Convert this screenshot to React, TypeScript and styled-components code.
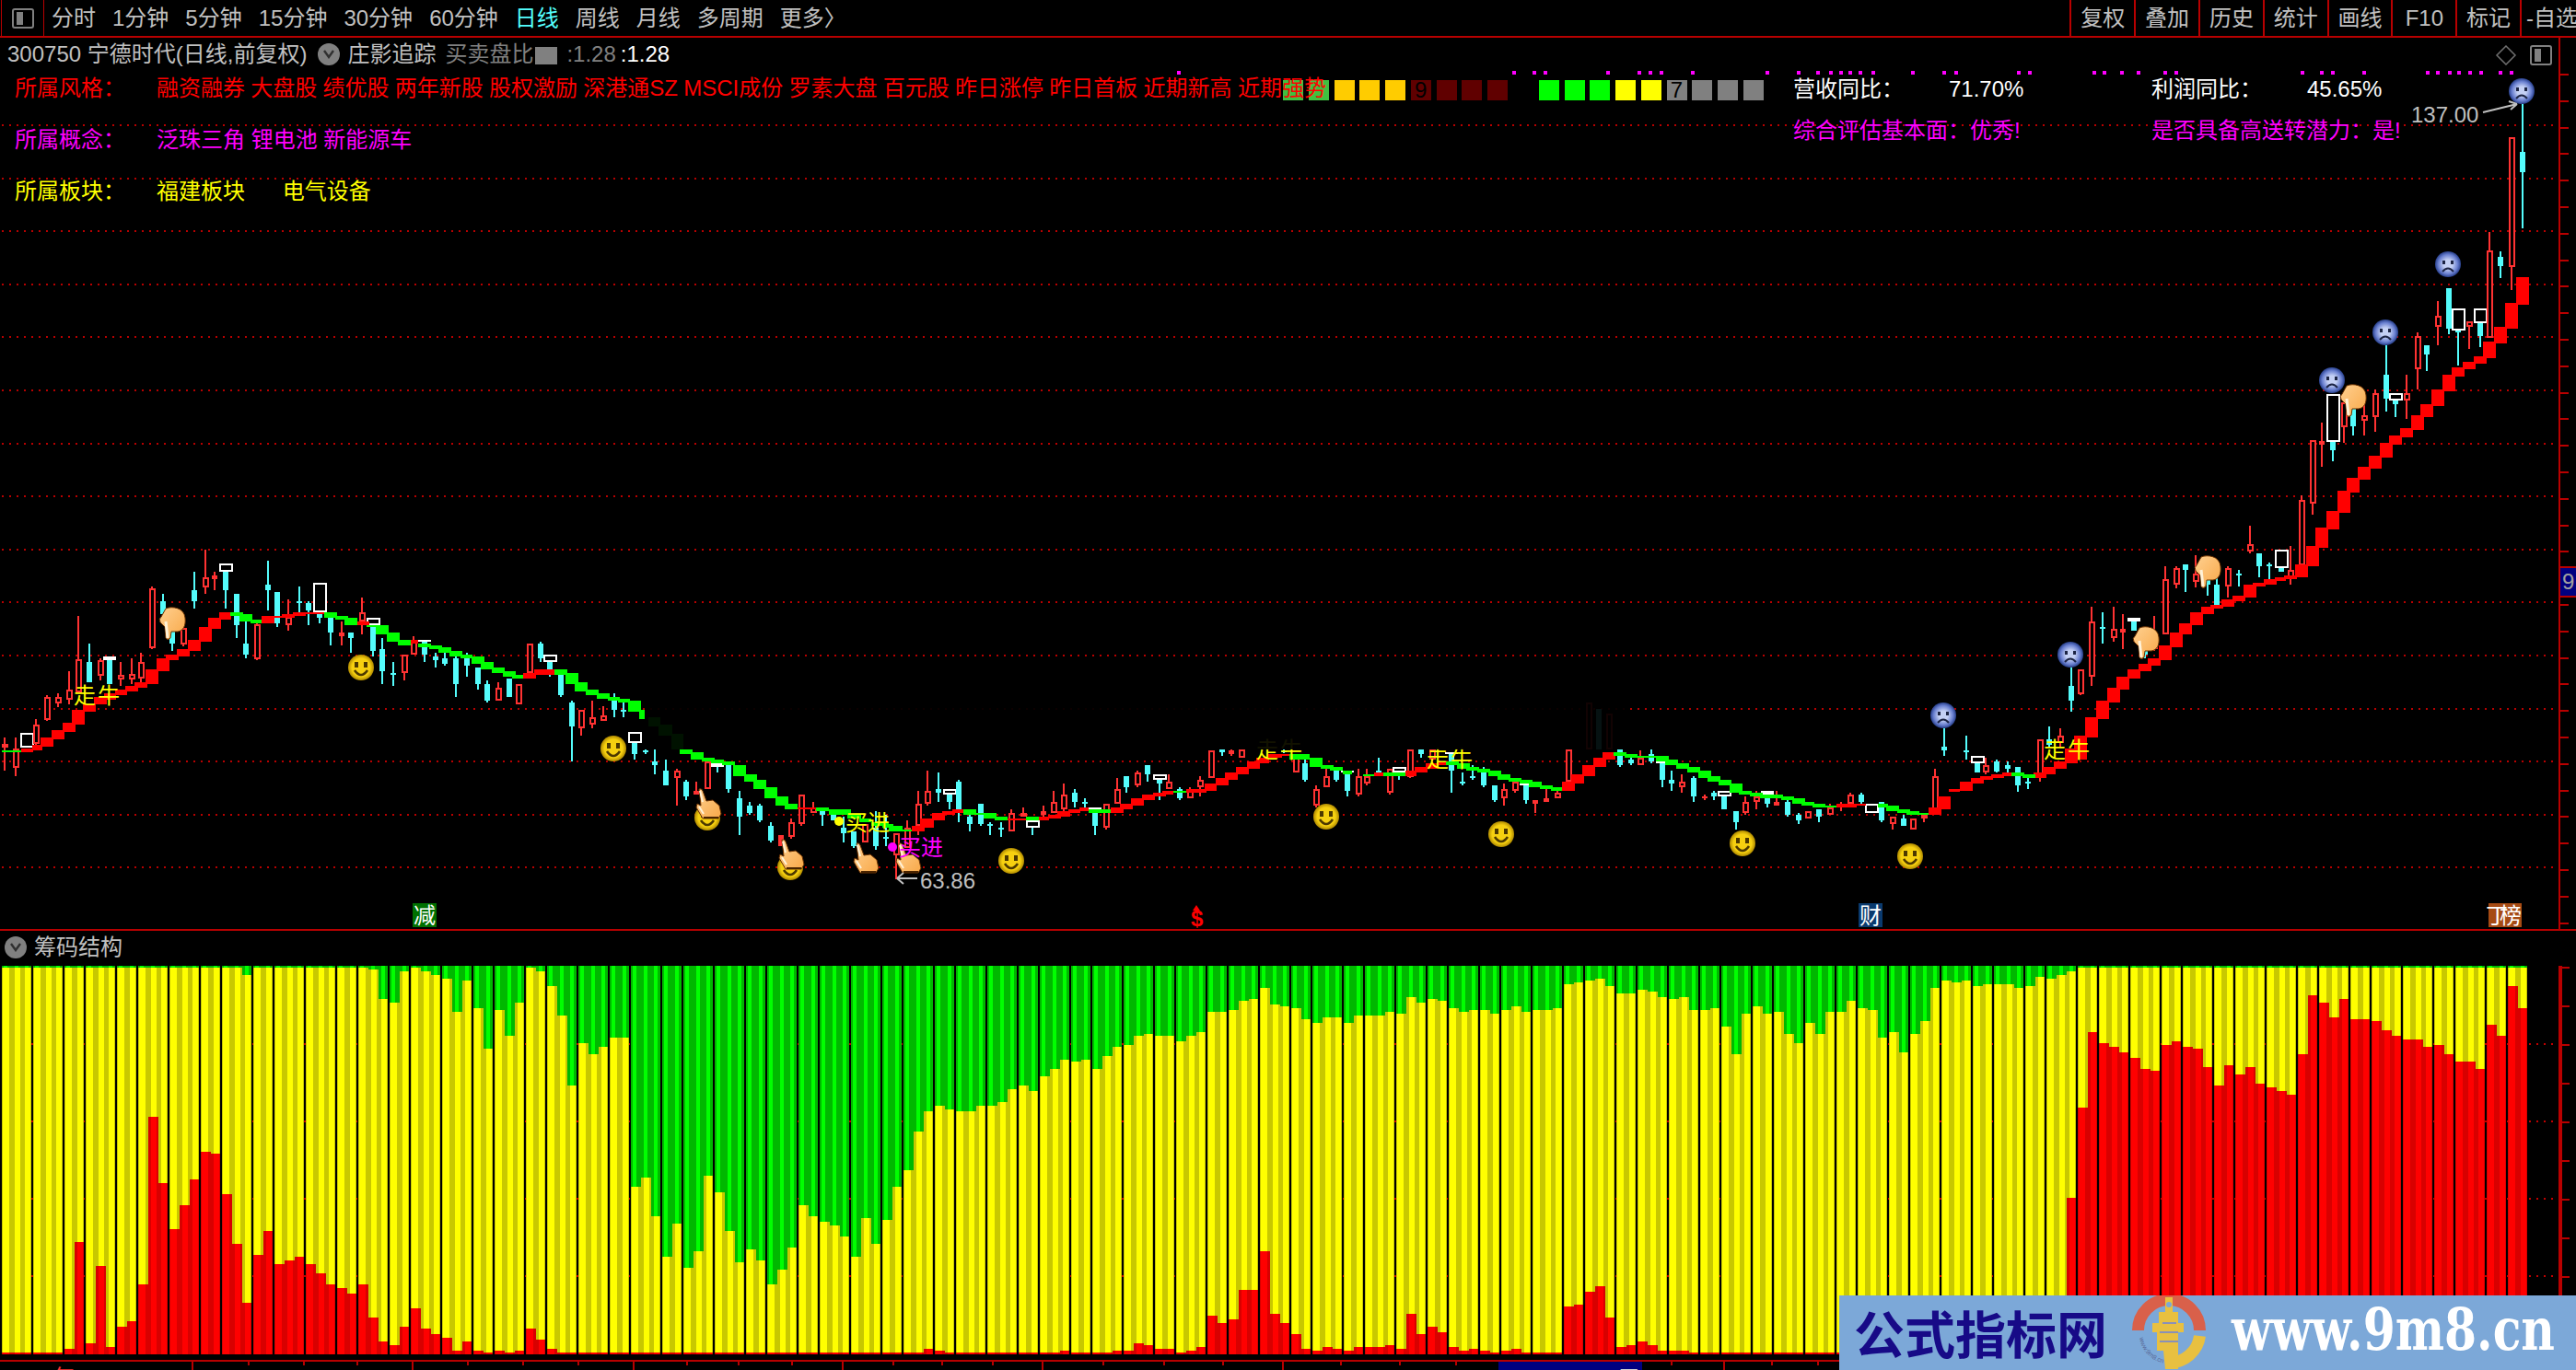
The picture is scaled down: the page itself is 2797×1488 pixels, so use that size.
import React from 'react';
import styled, { createGlobalStyle } from 'styled-components';

const SANS = '"Liberation Sans", "Noto Sans CJK SC", sans-serif';
const LINE = '#b80000';

const GlobalStyle = createGlobalStyle`
  html, body { margin: 0; padding: 0; background: #000; }
  #root { width: 2797px; height: 1488px; overflow: hidden; }
`;

const Root = styled.div`
  position: relative;
  width: 2797px;
  height: 1488px;
  background: #000;
  display: flex;
  flex-direction: column;
  overflow: hidden;
  font-family: ${SANS};
  font-size: 24px;
  line-height: 24px;
  color: #c0c0c0;
  white-space: nowrap;
`;

/* ---------- toolbar ---------- */
const Toolbar = styled.header`
  flex: none;
  height: 39px;
  display: flex;
  align-items: stretch;
  justify-content: space-between;
  border-bottom: 2px solid ${LINE};
`;
const LeftTools = styled.div`
  display: flex;
  align-items: center;
`;
const MenuBox = styled.div`
  width: 45px;
  align-self: stretch;
  margin-left: 1px;
  margin-right: 8px;
  border-left: 1px solid ${LINE};
  border-right: 1px solid ${LINE};
  display: flex;
  align-items: center;
  justify-content: center;
`;
const PanelIcon = styled.span`
  display: block;
  box-sizing: border-box;
  width: 24px;
  height: 22px;
  border: 2px solid #808080;
  border-radius: 3px;
  position: relative;
  &::before {
    content: '';
    position: absolute;
    left: 3px;
    top: 2px;
    bottom: 2px;
    width: 7px;
    background: #808080;
  }
`;
const Tabs = styled.nav`
  display: flex;
  gap: 18px;
`;
const Tab = styled.span<{ $active?: boolean }>`
  color: ${p => (p.$active ? '#54ffff' : '#c0c0c0')};
`;
const RightTools = styled.div`
  display: flex;
`;
const ToolButton = styled.span`
  box-sizing: border-box;
  width: 69.8px;
  border-left: 2px solid ${LINE};
  display: flex;
  align-items: center;
  justify-content: center;
`;
const ClippedButton = styled(ToolButton)`
  width: 61px;
  justify-content: flex-start;
  padding-left: 5px;
  overflow: hidden;
`;

/* ---------- main pane ---------- */
const MainPane = styled.section`
  position: relative;
  flex: none;
  height: 968px;
  border-bottom: 2px solid ${LINE};
`;
const ChartLayer = styled.svg`
  position: absolute;
  left: 0;
  top: 0;
  display: block;
`;
const TitleRow = styled.div`
  position: relative;
  height: 36px;
  padding-left: 8px;
  display: flex;
  align-items: center;
`;
const Chevron = styled.span`
  display: inline-flex;
  flex: none;
  align-items: center;
  justify-content: center;
  width: 24px;
  height: 24px;
  border-radius: 50%;
  background: #808080;
`;
const TitleChevron = styled(Chevron)`
  margin: 0 8px 0 12px;
`;
const StudyName = styled.span`
  margin-right: 10px;
`;
const DimLabel = styled.span`
  color: #808080;
`;
const GreyBox = styled.span`
  width: 24px;
  height: 19px;
  margin: 2px 10px 0 2px;
  background: #808080;
`;
const RatioA = styled.span`
  color: #808080;
  margin-right: 5px;
`;
const RatioB = styled.span`
  color: #fff;
`;
const Attributes = styled.div`
  position: relative;
  margin-top: 7px;
  padding-left: 16px;
  display: grid;
  grid-template-columns: 154px auto;
  row-gap: 32px;
  justify-content: start;
`;
const AttrLabel = styled.span<{ $c: string }>`
  color: ${p => p.$c};
`;
const AttrValue = styled.span<{ $c: string; $gap?: number }>`
  color: ${p => p.$c};
  word-spacing: ${p => p.$gap ?? 0}px;
`;
const BlockStrip = styled.div`
  position: absolute;
  left: 1393px;
  top: 46px;
  display: flex;
  gap: 5.75px;
`;
const Block = styled.span<{ $c: string; $after?: number }>`
  width: 22px;
  height: 22px;
  background: ${p => p.$c};
  margin-right: ${p => p.$after ?? 0}px;
  color: #000;
  text-align: center;
  line-height: 22px;
  overflow: hidden;
`;
const Stats = styled.div`
  position: absolute;
  left: 1947px;
  top: 44px;
  display: grid;
  grid-template-columns: 389px 280px;
  row-gap: 21px;
`;
const StatCell = styled.div`
  display: grid;
  grid-template-columns: 169px auto;
  color: #fff;
`;
const StatNote = styled.div`
  color: #ff00ff;
`;
const RightIcons = styled.div`
  position: absolute;
  right: 26px;
  top: 8px;
  display: flex;
  align-items: center;
  gap: 14px;
`;
const PriceTag = styled.div`
  position: absolute;
  left: 2780px;
  top: 574px;
  width: 17px;
  height: 34px;
  box-sizing: border-box;
  background: #000080;
  border-top: 2px solid ${LINE};
  border-bottom: 2px solid ${LINE};
  color: #a0a0a0;
  line-height: 30px;
  padding-left: 2px;
  overflow: hidden;
`;

/* ---------- lower pane ---------- */
const SubHeader = styled.div`
  flex: none;
  height: 38px;
  display: flex;
  align-items: center;
  padding-left: 5px;
  gap: 8px;
  padding-bottom: 2px;
  box-sizing: border-box;
`;
const SubChart = styled.svg`
  flex: none;
  display: block;
`;
const Watermark = styled.aside`
  position: absolute;
  left: 1997px;
  top: 1407px;
  width: 800px;
  height: 81px;
  background: #7ca8d8;
  display: flex;
  align-items: center;
`;
const WatermarkTitle = styled.span`
  margin-left: 16px;
  font-family: "Noto Sans CJK SC", sans-serif;
  font-weight: 700;
  font-size: 55px;
  line-height: 60px;
  color: #170a87;
  margin-top: -4px;
`;
const Logo = styled.svg`
  flex: none;
  margin-left: 27px;
  margin-top: -1px;
`;
const WatermarkUrl = styled.span`
  font-family: "DejaVu Serif", serif;
  font-weight: 700;
  font-size: 63px;
  line-height: 70px;
  margin-top: -8px;
  margin-left: 28px;
  color: #fff;
  transform: scaleX(0.8);
  transform-origin: left center;
`;

const ChartText = styled.text<{ $c: string; $size?: number; $bold?: boolean }>`
  font-family: ${SANS};
  font-size: ${p => p.$size ?? 24}px;
  font-weight: ${p => (p.$bold ? 700 : 400)};
  fill: ${p => p.$c};
`;

/* ---------- data helpers ---------- */
type Frame = { sx: number; x0: number; y0: number; sy?: number };
const Z4: Frame = { sx: 1.96, x0: 0, y0: 580 };
const Z5: Frame = { sx: 1.96, x0: 700, y0: 760 };
const Z10: Frame = { sx: 2.306, x0: 1480, y0: 770 };
const Z8: Frame = { sx: 2.25, x0: 2100, y0: 300, sy: 2.8 };

const fx = (f: Frame, v: number) => f.x0 + v / f.sx;
const fy = (f: Frame, v: number) => f.y0 + v / (f.sy ?? 3);

type C = [number, number, number, number, number, string, number?];

const candles4: C[] = [
  [10,663,770,683,697,'r'],[33,663,788,700,763,'r'],[57,647,697,647,697,'b'],[77,603,690,622,685,'r'],[100,525,608,532,607,'r'],
  [123,520,565,532,553,'r'],[147,447,555,508,541,'r'],[167,267,520,407,515,'r'],[190,357,483,417,483,'c'],[213,405,477,412,463,'r'],
  [233,400,489,400,410,'W',489],[257,417,495,460,475,'r'],[280,405,490,455,475,'r'],[300,387,490,418,470,'r'],[323,172,375,178,373,'r'],
  [347,195,290,220,260,'c'],[366,315,380,315,357,'c'],[390,305,365,305,361,'r'],[413,123,243,183,219,'c'],[437,51,195,142,175,'r'],
  [457,123,183,135,147,'f'],[480,95,243,95,122,'w',183],[503,195,339,195,297,'c'],[523,285,405,357,393,'c'],[547,291,411,293,409,'r'],
  [570,87,249,165,183,'c'],[590,189,303,189,291,'c'],[613,213,315,270,297,'r'],[637,171,255,220,225,'c'],[657,220,297,225,249,'c'],
  [680,160,291,160,255,'w',273],[704,270,363,273,321,'c'],[727,285,363,321,333,'f'],[747,321,387,321,339,'c'],[770,207,327,255,285,'r'],
  [794,273,399,273,297,'w',381],[813,339,489,375,447,'c'],[837,417,495,453,459,'c'],[860,393,477,393,453,'r'],[880,333,393,345,393,'r'],
  [903,345,417,345,351,'W',393],[927,387,435,399,411,'c'],[947,387,429,405,423,'c'],[970,399,531,405,489,'c'],[993,387,465,405,429,'c'],
  [1017,435,507,435,489,'c'],[1037,477,549,489,543,'c'],[1060,483,543,501,543,'r'],[1083,471,531,471,531,'c'],[1103,489,555,489,555,'r'],
  [1127,357,453,357,453,'r'],[1150,351,417,357,405,'c'],[1170,393,465,393,417,'w',459],[1193,459,531,459,525,'c'],[1217,543,741,549,627,'c'],
  [1237,573,657,573,633,'r'],[1260,543,633,597,621,'r'],[1284,561,609,591,609,'r'],[1307,519,597,543,573,'c'],[1327,549,597,573,579,'c'],
  [1350,645,735,645,681,'w',717],[1374,702,717,705,711,'c'],
];
const candles5: C[] = [
  [22,162,243,200,213,'c'],[45,195,279,231,279,'c'],[68,225,345,231,255,'r'],[88,261,327,267,315,'c'],[110,267,309,297,309,'f'],
  [134,201,291,201,291,'r'],[155,207,237,207,219,'W',219],[178,219,303,207,213,'W',291],[202,297,441,321,381,'c'],[224,333,375,345,369,'c'],
  [245,339,399,345,393,'c'],[268,399,465,411,459,'c'],[290,441,477,441,477,'f'],[312,387,453,399,447,'r'],[334,309,411,309,405,'r'],
  [358,333,369,351,369,'r'],[378,351,411,351,357,'W',375],[402,363,393,363,393,'c'],[424,381,465,417,435,'c'],[445,429,483,429,477,'c'],
  [468,405,465,405,465,'r'],[491,363,489,417,477,'c'],[514,375,477,447,453,'c'],[535,435,585,435,507,'r'],[558,393,483,417,483,'r'],
  [582,297,441,339,411,'r'],[602,231,345,297,339,'r'],[625,237,333,291,303,'c'],[648,291,357,291,309,'w',333],[668,261,399,267,369,'c'],
  [691,369,429,381,405,'c'],[715,339,411,339,405,'c'],[735,399,441,405,411,'c'],[758,399,447,417,423,'c'],[781,357,429,369,429,'r'],
  [805,351,381,369,381,'r'],[825,393,441,393,417,'w',417],[849,345,381,363,375,'f'],[871,297,369,333,369,'r'],[892,273,363,309,357,'r'],
  [915,291,351,303,333,'c'],[937,321,351,333,339,'c'],[958,351,441,351,357,'W',411],[982,339,423,339,417,'r'],[1005,255,339,291,339,'r'],
  [1025,249,303,249,285,'c'],[1048,231,285,237,279,'r'],[1071,213,267,213,243,'c'],[1095,243,327,243,261,'w',273],[1115,243,291,267,291,'r'],
  [1138,285,327,291,321,'c'],[1161,285,321,291,321,'r'],[1182,249,315,261,285,'r'],[1205,165,255,165,255,'r'],[1228,162,183,162,171,'c'],
  [1248,162,183,165,177,'f'],[1271,162,189,162,189,'r'],[1360,162,175,165,172,'c'],[1386,183,237,183,237,'r'],[1405,195,267,207,261,'c'],
  [1428,279,351,291,345,'r'],[1451,225,285,249,285,'r'],[1471,225,267,231,261,'c'],[1495,231,315,231,237,'W',297],[1519,225,315,249,309,'r'],
];
const candles10: C[] = [
  [10,195,249,219,243,'r'],[39,159,207,202,207,'c'],[67,195,279,195,273,'r'],[90,189,231,189,207,'w',207],[118,132,225,132,222,'r'],
  [145,132,159,132,147,'c'],[172,132,170,132,165,'r'],[222,141,273,141,147,'W',201],[250,207,249,237,243,'c'],[274,183,231,219,225,'c'],
  [301,189,255,207,249,'c'],[330,249,303,249,297,'c'],[352,243,315,261,291,'r'],[380,237,273,237,267,'r'],[408,237,309,237,249,'W',297],
  [431,297,339,297,309,'f'],[458,261,303,291,303,'f'],[486,267,291,273,291,'r'],[514,132,237,132,237,'r'],[565,-20,132,-20,132,'r'],
  [590,0,132,0,132,'c'],[615,15,132,15,132,'r'],[643,132,189,132,183,'c'],[671,159,183,165,177,'c'],[695,135,183,159,183,'r'],
  [722,132,177,147,171,'c'],[750,171,255,171,177,'W',231],[772,201,267,231,243,'c'],[799,213,273,237,255,'r'],[828,219,303,225,285,'c'],
  [855,279,297,285,291,'f'],[878,267,297,273,285,'c'],[905,267,327,267,285,'w',327],[934,333,393,333,369,'c'],[957,285,345,303,339,'r'],
  [985,267,327,285,303,'r'],[1012,267,321,267,279,'W',309],[1035,267,315,303,315,'f'],[1063,297,351,303,345,'c'],[1090,339,375,345,363,'c'],
  [1114,333,357,333,357,'r'],[1141,327,369,327,351,'c'],[1168,309,345,321,345,'r'],[1196,303,333,309,315,'f'],[1219,273,315,279,309,'r'],
  [1247,273,309,279,303,'c'],[1274,309,339,309,339,'b'],[1298,303,369,303,363,'c'],[1326,351,393,351,375,'r'],[1353,345,381,357,381,'c'],
  [1377,357,393,357,393,'r'],[1404,345,369,345,357,'r'],[1431,195,327,219,327,'r'],
];
const candles8: C[] = [
  [24,1375,1458,1430,1442,'c'],[78,1397,1470,1441,1447,'c'],[105,1459,1508,1459,1481,'w',1508],[127,1465,1515,1487,1509,'r'],[154,1470,1510,1475,1505,'c'],
  [181,1475,1510,1487,1497,'c'],[204,1492,1568,1492,1548,'c'],[230,1520,1560,1537,1542,'c'],[258,1408,1537,1408,1526,'r'],[281,1369,1430,1408,1425,'c'],
  [308,1375,1430,1397,1420,'r'],[335,1190,1323,1246,1291,'c'],[357,1196,1275,1196,1270,'r'],[384,1005,1246,1051,1217,'r'],[411,1022,1117,1067,1072,'c'],
  [438,1005,1112,1073,1100,'r'],[461,1028,1134,1073,1084,'f'],[488,1040,1078,1040,1050,'W',1078],[515,1140,1162,1140,1150,'c'],[538,1034,1140,1120,1135,'r'],
  [565,882,1089,921,1089,'r'],[592,882,949,888,938,'r'],[614,876,960,876,893,'c'],[640,849,945,905,930,'r'],[668,921,972,921,938,'c'],
  [691,916,1000,938,1000,'c'],[718,882,977,888,944,'r'],[744,893,944,904,910,'c'],[771,759,843,815,837,'r'],[794,843,916,843,882,'c'],
  [820,871,921,876,882,'c'],[848,832,899,832,888,'w',899],[870,820,938,893,921,'r'],[897,665,880,680,880,'r'],[924,497,725,497,691,'r'],
  [947,445,580,502,512,'f'],[974,357,563,357,505,'w',529],[1001,384,507,384,460,'r'],[1023,400,484,400,456,'c'],[1050,389,484,423,440,'r'],
  [1077,345,473,356,428,'r'],[1104,209,412,300,372,'c'],[1127,356,428,356,378,'w',389],[1154,300,434,356,378,'r'],[1181,171,344,182,283,'r'],
  [1204,209,288,209,238,'c'],[1231,76,210,121,154,'r'],[1257,36,176,36,160,'c'],[1280,98,272,98,165,'w',171],[1307,138,221,138,154,'r'],
  [1334,98,216,98,143,'w',182],[1356,-134,188,-78,188,'r'],[1384,-76,5,-59,-30,'c'],[1411,-423,42,-423,-28,'r'],[1438,-524,-146,-378,-316,'c'],
];

type S = [number, number, number, number, string];
const stair4: S[] = [
  [3,47,705,710,'g'],[45,70,700,711,'r'],[68,90,687,705,'r'],[86,113,663,693,'r'],[110,137,639,669,'r'],[133,161,615,645,'r'],[153,180,573,621,'r'],
  [176,204,555,579,'r'],[200,227,531,555,'r'],[222,247,519,540,'r'],[245,270,507,525,'r'],[267,294,495,513,'r'],[286,313,483,501,'r'],[310,337,441,489,'r'],
  [333,361,405,447,'r'],[353,380,393,411,'r'],[376,404,375,399,'r'],[400,427,345,381,'r'],[423,451,303,351,'r'],[443,470,273,309,'r'],[466,492,255,279,'r'],
  [490,517,255,267,'g'],[510,537,261,285,'g'],[533,561,279,291,'g'],[557,584,267,291,'r'],[580,607,267,273,'r'],[600,627,261,273,'r'],[623,650,255,267,'r'],
  [650,690,255,261,'r'],[690,717,255,273,'g'],[713,740,267,279,'g'],[733,760,273,297,'g'],[760,785,285,297,'r'],[780,806,297,303,'g'],[800,827,297,327,'g'],
  [823,851,321,351,'g'],[847,874,345,363,'g'],[874,890,345,357,'r'],[890,917,357,369,'g'],[913,940,363,375,'g'],[933,960,369,387,'g'],[956,983,381,399,'g'],
  [980,1006,393,405,'g'],[1004,1031,399,423,'g'],[1023,1050,417,441,'g'],[1047,1074,435,453,'g'],[1070,1097,447,465,'g'],[1090,1117,459,471,'g'],
  [1113,1140,453,471,'r'],[1137,1180,441,459,'r'],[1180,1207,441,459,'g'],[1203,1230,453,489,'g'],[1223,1250,483,513,'g'],[1247,1274,507,525,'g'],
  [1270,1297,519,537,'g'],[1294,1320,531,543,'g'],[1316,1340,537,549,'g'],[1337,1364,543,579,'g'],[1360,1372,573,603,'g'],[1380,1405,597,627,'g'],
  [1402,1430,621,657,'g'],[1428,1455,651,702,'g'],[1446,1473,702,717,'g'],[1470,1497,711,735,'g'],
];
const stair5: S[] = [
  [122,149,189,201,'g'],[141,168,195,207,'g'],[165,192,201,213,'g'],[188,216,213,249,'g'],[212,239,243,267,'g'],[231,258,261,291,'g'],[255,282,285,321,'g'],
  [278,305,315,345,'g'],[298,325,339,357,'g'],[325,365,351,357,'r'],[365,392,351,363,'g'],[392,440,357,375,'g'],[432,460,375,387,'g'],[456,483,387,399,'g'],
  [483,520,399,411,'g'],[505,530,405,417,'g'],[520,548,411,429,'g'],[545,570,423,429,'g'],[568,595,411,429,'r'],[587,615,387,417,'r'],[611,638,369,393,'r'],
  [634,661,363,375,'r'],[655,678,357,369,'r'],[678,705,357,375,'g'],[705,725,369,375,'g'],[721,748,369,387,'g'],[745,772,381,393,'g'],[772,811,387,393,'r'],
  [811,838,381,393,'g'],[838,861,381,393,'r'],[858,885,375,387,'r'],[878,905,363,381,'r'],[901,928,357,369,'r'],[925,945,351,363,'r'],[945,995,357,369,'g'],
  [992,1019,351,369,'r'],[1011,1038,339,357,'r'],[1035,1062,321,345,'r'],[1058,1085,309,327,'r'],[1082,1109,303,315,'r'],[1102,1125,297,309,'r'],
  [1125,1152,297,303,'g'],[1152,1195,291,303,'r'],[1191,1218,273,297,'r'],[1215,1242,255,279,'r'],[1235,1262,237,261,'r'],[1258,1285,219,243,'r'],
  [1282,1309,201,225,'r'],[1301,1328,189,207,'r'],[1324,1356,177,189,'r'],[1356,1380,177,183,'r'],[1372,1392,177,195,'g'],[1388,1415,177,195,'g'],
  [1415,1442,189,219,'g'],[1439,1466,213,225,'g'],[1458,1485,219,231,'g'],[1485,1505,231,243,'g'],
];
const stair10: S[] = [
  [0,27,213,219,'g'],[27,51,207,219,'r'],[51,105,207,219,'g'],[105,133,201,219,'r'],[129,161,189,207,'r'],[157,188,177,195,'r'],[185,208,171,183,'r'],
  [208,240,171,183,'g'],[236,267,177,195,'g'],[258,290,189,201,'g'],[286,318,195,207,'g'],[314,346,201,219,'g'],[337,369,213,231,'g'],[364,396,225,237,'g'],
  [392,424,231,243,'g'],[415,447,237,255,'g'],[443,475,249,261,'g'],[470,503,255,267,'g'],[498,530,237,267,'r'],[521,553,213,243,'r'],[549,581,183,219,'r'],
  [576,608,159,189,'r'],[600,632,141,165,'r'],[627,659,141,153,'g'],[655,687,147,159,'g'],[687,734,153,159,'g'],[734,766,153,171,'g'],[757,789,165,183,'g'],
  [784,816,177,195,'g'],[812,844,189,207,'g'],[839,871,201,225,'g'],[862,894,219,237,'g'],[890,922,231,249,'g'],[918,950,243,273,'g'],[941,973,267,279,'g'],
  [968,1000,273,285,'g'],[995,1027,279,291,'g'],[1019,1051,279,291,'g'],[1047,1079,285,297,'g'],[1075,1107,291,309,'g'],[1098,1130,303,315,'g'],
  [1125,1157,309,321,'g'],[1157,1185,315,321,'g'],[1185,1235,309,321,'r'],[1235,1260,309,315,'r'],[1290,1314,309,321,'g'],[1310,1342,315,333,'g'],
  [1337,1369,327,339,'g'],[1360,1392,333,345,'g'],[1392,1420,339,345,'g'],[1416,1448,321,345,'r'],[1439,1471,285,327,'r'],
];
const stair8: S[] = ([
  [36,63,1560,1568],[63,94,1537,1565],[90,121,1526,1543],[112,143,1520,1532],[139,170,1515,1526],[166,189,1509,1520],[243,274,1509,1526],[265,297,1492,1515],
  [292,324,1476,1498],[319,351,1436,1481],[342,374,1397,1470],[369,400,1341,1403],[396,427,1291,1347],[423,454,1252,1296],[445,477,1218,1257],[472,504,1196,1224],
  [499,531,1179,1201],[522,553,1162,1184],[549,580,1123,1168],[576,607,1084,1129],[598,630,1056,1090],[625,657,1022,1062],[652,684,1005,1028],[675,706,999,1011],
  [702,733,983,1005],[729,760,972,989],[756,787,938,978],[778,810,932,944],[805,837,921,938],[832,860,915,927],[855,886,910,921],[882,913,876,916],[909,940,820,882],
  [931,963,764,826],[958,990,714,770],[985,1017,652,720],[1008,1039,613,658],[1035,1066,580,619],[1062,1093,546,585],[1089,1120,507,552],[1111,1143,484,512],
  [1138,1170,462,490],[1165,1197,423,468],[1188,1219,389,428],[1215,1246,344,395],[1242,1273,300,350],[1264,1296,277,305],[1291,1323,260,283],[1318,1350,243,265],
  [1341,1372,199,249],[1368,1399,154,204],[1395,1426,81,160],[1422,1453,3,87],
] as [number, number, number, number][]).map(r => [...r, 'r'] as S).concat([
  [189,220,1509,1520,'g'],[216,247,1515,1526,'g'],
]);

/* chip-structure bars: y read in reference rows, converted to px below the pane top */
const rep = (v: number, n: number) => Array(n).fill(v) as number[];
const g6 = [...rep(213,23),237,...rep(213,11),219,315,327,225,213,225,237,249,357,255,345,477,351,435,327,213,225,273,369,597,459,495,471,441,441,927,897,1023,1155,1047,1191,1137,891,945,1071,1173,1131,1167,1245,1197,1125,987,1023,1041];
const r6 = [...rep(1467,6),1455,1107,1437,1185,1449,1383,1365,1245,699,915,1065,987,903,813,819,951,1113,1305,1149,1071,1179,1167,1155,1179,1209,1245,1257,1275,1245,1353,1431,1443,1383,1323,1389,1407,1419,1461,1431,1461,1467,1461,1467,1461,1389,1425,1455,...rep(1467,26)];
const g9 = [993,1029,1095,969,1053,975,867,813,687,621,603,615,621,621,603,603,591,549,537,555,507,483,453,459,453,483,441,411,405,375,369,375,375,393,375,363,297,297,291,261,255,219,273,279,285,321,333,315,315,333,309,309,309,297,303,249,267,255,261,285,297,291,291,303,291,279,297,291,291,285,207,201,195,189,213,237,237,225,231,249,255,249,291,291,285,345,435,303];
const r9o: Record<number, number> = {9:1395,10:1401,22:1401,27:1401,28:1401,29:1377,30:1383,31:1395,32:1395,34:1401,35:1389,36:1287,37:1311,38:1299,39:1203,40:1203,41:1077,42:1281,43:1311,44:1347,45:1395,46:1401,47:1389,48:1395,49:1401,50:1389,51:1389,52:1389,53:1383,54:1395,55:1281,56:1347,57:1323,58:1341,59:1389,60:1401,61:1395,62:1401,64:1401,65:1395,70:1257,71:1251,72:1209,73:1191,74:1293,75:1389,76:1383,77:1371,78:1383,79:1401,80:1401,81:1401};
const g11 = [159,183,177,249,279,213,249,177,177,141,165,171,261,243,309,249,207,99,75,81,75,93,87,87,87,99,93,63,69,57,45,33,...rep(33,42)];
const r11 = [...rep(1287,30),783,489,243,279,291,309,327,363,369,285,273,291,297,357,417,351,381,357,411,423,435,447,315,123,147,195,135,201,201,207,237,255,267,267,291,285,315,339,339,363,219,255,93,165];

const greens = [...g6.map(v => (v - 207) / 3), ...g9.map(v => (v - 147) / 3), ...g11.map(v => (v - 27) / 3)];
const reds = [...r6.map(v => (v - 207) / 3), ...g9.map((_, i) => ((r9o[i] ?? 1407) - 147) / 3), ...r11.map(v => (v - 27) / 3)];
const BAR_P = 11.385;
const barX = (i: number) => Math.round(1.5 + i * BAR_P);

const MAIN_GRID = Array.from({ length: 15 }, (_, k) => Math.round(136 + k * 57.6));
const MAIN_TICKS = Array.from({ length: 33 }, (_, k) => Math.round(80 + k * 28.8));

const MAGENTA_X = [1278,1642,1664,1676,1744,1778,1790,1802,1836,1917,1951,1972,1986,1997,2007,2018,2032,2075,2109,2122,2190,2202,2272,2283,2302,2320,2349,2361,2498,2519,2531,2565,2634,2645,2658,2668,2680,2692,2713,2725];

const C_RED = '#ff3232';
const C_CYAN = '#54fcfc';

const Candle = ({ f, d }: { f: Frame; d: C }) => {
  const [xz, wt, wb, bt, bb, t, cb] = d;
  const x = Math.round(fx(f, xz));
  const y = (v: number) => Math.round(fy(f, v));
  if (t === 'b') {
    return <rect x={x - 6} y={y(bt) + 1} width={13} height={y(bb) - y(bt) - 2} fill="#000" stroke="#fff" strokeWidth={2} />;
  }
  if (t === 'w' || t === 'W') {
    const top = y(bt);
    const bot = y(bb);
    const cyanEnd = y(cb ?? bb);
    return (
      <g>
        <rect x={x - 1} y={bot} width={2} height={Math.max(0, y(wb) - bot)} fill={C_CYAN} />
        <rect x={x - 3} y={bot} width={6} height={Math.max(0, cyanEnd - bot)} fill={C_CYAN} />
        {t === 'w' ? (
          <rect x={x - 6} y={top + 1} width={13} height={bot - top - 2} fill="#000" stroke="#fff" strokeWidth={2} />
        ) : (
          <rect x={x - 7} y={top} width={14} height={Math.max(2, bot - top)} fill="#fff" />
        )}
      </g>
    );
  }
  const col = t === 'c' ? C_CYAN : C_RED;
  const top = y(bt);
  const bot = y(bb);
  return (
    <g>
      <rect x={x - 1} y={y(wt)} width={2} height={y(wb) - y(wt)} fill={col} />
      {t === 'r' ? (
        <rect x={x - 2} y={top + 1} width={5} height={Math.max(2, bot - top - 2)} fill="#000" stroke={col} strokeWidth={2} />
      ) : (
        <rect x={x - 3} y={top} width={6} height={Math.max(2, bot - top)} fill={col} />
      )}
    </g>
  );
};

const Stair = ({ f, d }: { f: Frame; d: S }) => {
  const x1 = Math.round(fx(f, d[0]));
  const x2 = Math.round(fx(f, d[1]));
  const y1 = Math.round(fy(f, d[2]));
  const y2 = Math.round(fy(f, d[3]));
  return <rect x={x1} y={y1} width={x2 - x1} height={y2 - y1} fill={d[4] === 'g' ? '#00ff00' : '#ff0000'} />;
};

const Smile = ({ x, y }: { x: number; y: number }) => (
  <g transform={`translate(${x - 14} ${y - 14})`}>
    <ellipse cx={14} cy={14} rx={14} ry={14} fill="url(#smileFill)" />
    <rect x={7} y={8} width={4} height={6} fill="#4c3800" />
    <rect x={17} y={8} width={4} height={6} fill="#4c3800" />
    <path d="M7 17 Q14 27 21 17" fill="none" stroke="#4c3800" strokeWidth={2.6} />
  </g>
);
const Sad = ({ x, y }: { x: number; y: number }) => (
  <g transform={`translate(${x - 14} ${y - 14})`}>
    <ellipse cx={14} cy={14} rx={14} ry={14} fill="url(#sadFill)" />
    <rect x={8} y={10} width={3} height={4} fill="#1c2444" />
    <rect x={17} y={10} width={3} height={4} fill="#1c2444" />
    <path d="M8 22 Q14 15 20 22" fill="none" stroke="#1c2444" strokeWidth={2} />
  </g>
);
const HandDown = ({ x, y }: { x: number; y: number }) => (
  <g transform={`translate(${x - 14} ${y - 17})`}>
    <path d="M8 1 C15 -2 28 0 29 11 C30 20 27 25 21 26 L14 26 L13 33 Q10 36 8 33 L7 21 L2 16 Q0 12 3 10 Z" fill="url(#handFill)" stroke="#6a3000" strokeWidth={1} />
    <path d="M8 15 L10 33" stroke="#fff2d8" strokeWidth={3} />
  </g>
);
const HandUp = ({ x, y }: { x: number; y: number }) => (
  <g transform={`translate(${x - 14} ${y - 16})`}>
    <path d="M4 0 Q7 -1 8 2 L12 13 L19 12 L26 18 L28 27 L25 32 L8 32 L1 20 L2 16 L6 18 Z" fill="url(#handFill)" stroke="#6a3000" strokeWidth={1} />
    <path d="M9 31 H25" stroke="#4a2400" strokeWidth={2} />
    <path d="M5 2 L8 14 M4 19 L9 27" stroke="#fff2d8" strokeWidth={2} fill="none" />
  </g>
);

const Tag = ({ x, w, bg, c, text }: { x: number; w: number; bg: string; c: string; text: string }) => (
  <g>
    <rect x={x} y={981} width={w} height={26} fill={bg} />
    <ChartText $c={c} x={x + 1} y={1003}>{text}</ChartText>
  </g>
);

const MainChart = () => (
  <ChartLayer width={2797} height={968} viewBox="0 41 2797 968">
    <defs>
      <radialGradient id="smileFill"><stop offset="0.7" stopColor="#f6d010" /><stop offset="1" stopColor="#b08a00" /></radialGradient>
      <radialGradient id="sadFill"><stop offset="0.35" stopColor="#c4d0f4" /><stop offset="0.75" stopColor="#6a80d0" /><stop offset="1" stopColor="#28408c" /></radialGradient>
      <linearGradient id="handFill" x1="0" y1="0" x2="1" y2="1"><stop offset="0" stopColor="#ffd090" /><stop offset="1" stopColor="#f8a848" /></linearGradient>
    </defs>
    <g shapeRendering="crispEdges">
      {MAIN_GRID.map(y => (
        <line key={y} x1={2} x2={2772} y1={y} y2={y} stroke="#b80000" strokeWidth={2} strokeDasharray="2 6" />
      ))}
      <rect x={2778} y={41} width={2} height={968} fill={LINE} />
      {MAIN_TICKS.map(y => <rect key={y} x={2780} y={y} width={9} height={2} fill={LINE} />)}
      {MAGENTA_X.map(x => <rect key={x} x={x} y={77} width={4} height={4} fill="#ff00ff" />)}
      {candles4.map((d, i) => <Candle key={i} f={Z4} d={d} />)}
      {candles5.map((d, i) => <Candle key={i} f={Z5} d={d} />)}
      {candles10.map((d, i) => <Candle key={i} f={Z10} d={d} />)}
      {candles8.map((d, i) => <Candle key={i} f={Z8} d={d} />)}
      {stair4.map((d, i) => <Stair key={i} f={Z4} d={d} />)}
      {stair5.map((d, i) => <Stair key={i} f={Z5} d={d} />)}
      {stair10.map((d, i) => <Stair key={i} f={Z10} d={d} />)}
      {stair8.map((d, i) => <Stair key={i} f={Z8} d={d} />)}
    </g>

    {[[392,725],[666,813],[768,888],[858,942],[1098,935],[1440,887],[1630,906],[1892,916],[2074,930]].map(([x,y]) => <Smile key={x} x={x} y={y} />)}
    {[[2110,777],[2248,711],[2532,413],[2590,361],[2658,287],[2738,99]].map(([x,y]) => <Sad key={x} x={x} y={y} />)}
    {[[186,677],[2329,698],[2396,621],[2554,435]].map(([x,y]) => <HandDown key={x} x={x} y={y} />)}
    {[[769,873],[859,928],[940,932],[986,932]].map(([x,y]) => <HandUp key={x} x={x} y={y} />)}

    <ChartText $c="#ffff00" x={80} y={764} letterSpacing={2}>走牛</ChartText>
    <ChartText $c="#ffff00" x={1364} y={823} letterSpacing={2}>走牛</ChartText>
    <ChartText $c="#ffff00" x={1549} y={833} letterSpacing={2}>走牛</ChartText>
    <ChartText $c="#ffff00" x={2219} y={823} letterSpacing={2}>走牛</ChartText>
    <circle cx={911} cy={892} r={5} fill="#ffff00" />
    <ChartText $c="#ffff00" x={918} y={902}>买进</ChartText>
    <circle cx={969} cy={920} r={5} fill="#ff00ff" />
    <ChartText $c="#ff00ff" x={976} y={929}>买进</ChartText>

    <path d="M974 954 H996 M974 954 L981 948 M974 954 L981 960" stroke="#c0c0c0" strokeWidth={2} fill="none" />
    <ChartText $c="#c0c0c0" x={999} y={965}>63.86</ChartText>
    <ChartText $c="#c0c0c0" x={2618} y={133}>137.00</ChartText>
    <path d="M2696 122 L2733 113 M2733 113 L2724 110 M2733 113 L2726 119" stroke="#c0c0c0" strokeWidth={2} fill="none" />

    <Tag x={448} w={26} bg="#007000" c="#fff" text="减" />
    <ChartText $c="#ff0000" $bold x={1293} y={1006}>$</ChartText>
    <path d="M1299 983 L1303 989 H1295 Z" fill="#ff0000" />
    <Tag x={2018} w={26} bg="#0a3a6e" c="#fff" text="财" />
    <rect x={2702} y={981} width={36} height={26} fill="#a64b14" />
    <ChartText $c="#fff" x={2699} y={1003}>丁</ChartText>
    <ChartText $c="#fff" x={2714} y={1003}>榜</ChartText>

    <rect x={700} y={760} width={1070} height={54} fill="#000" opacity={0.93} />
  </ChartLayer>
);

const barDark: Record<string, string> = { g: '#00b800', y: '#c8c800', r: '#d80000' };
const barBright: Record<string, string> = { g: '#00ff00', y: '#ffff00', r: '#ff0000' };

const ChipBar = ({ i }: { i: number }) => {
  const x = barX(i);
  const mergedNext = barX(i + 1) - x === 11 && i < 240;
  const mergedPrev = i > 0 && x - barX(i - 1) === 11;
  const w = mergedNext ? 11 : 10;
  const g = Math.max(2, greens[i]);
  const r = Math.min(420, reds[i]);
  const parts: [string, number, number][] = [['g', 0, g], ['y', g, r], ['r', r, 422]];
  return (
    <g>
      {parts.filter(p => p[2] > p[1]).map(([k, a, b]) => {
        const inset = k === 'g' ? 2 : 1;
        const bx = mergedPrev ? x + 3 : x + inset;
        const bw = k === 'g' ? 4 : mergedPrev ? 6 : mergedNext ? 7 : 8;
        return (
          <g key={k}>
            <rect x={x} y={1049 + a} width={w} height={b - a} fill={barDark[k]} />
            <rect x={bx} y={1049 + a} width={bw} height={b - a} fill={barBright[k]} />
          </g>
        );
      })}
    </g>
  );
};

const ChipChart = () => (
  <SubChart width={2797} height={428} viewBox="0 1049 2797 428">
    <g shapeRendering="crispEdges">
      {[1134, 1218, 1302, 1386].map(y => (
        <line key={y} x1={2} x2={2776} y1={y} y2={y} stroke="#c00000" strokeWidth={2} strokeDasharray="2 6" />
      ))}
      <rect x={2778} y={1049} width={4} height={428} fill={LINE} />
      {[1050, 1092, 1134, 1176, 1218, 1260, 1302, 1344, 1386, 1428, 1470].map(y => (
        <rect key={y} x={2782} y={y} width={8} height={2} fill={LINE} />
      ))}
      {Array.from({ length: 241 }, (_, i) => <ChipBar key={i} i={i} />)}
    </g>
  </SubChart>
);

const MAJOR = [[208,'3'],[447,'4'],[687,'5'],[914,'6'],[1131,'7'],[1392,'8'],[1871,'10']] as [number, string][];
const MINOR = [269,329,387,507,567,627,745,801,859,969,1022,1077,1197,1263,1327,1455,1519,1580,1814,1923,1973];

const TimeAxis = () => (
  <SubChart width={2797} height={11} viewBox="0 1477 2797 11">
    <g shapeRendering="crispEdges">
      <rect x={0} y={1477} width={2782} height={2} fill={LINE} />
      {MINOR.map(x => <rect key={x} x={x} y={1479} width={2} height={4} fill={LINE} />)}
      {MAJOR.map(([x]) => <rect key={x} x={x} y={1479} width={2} height={9} fill={LINE} />)}
      <rect x={1627} y={1479} width={156} height={9} fill="#000080" />
    </g>
    <ChartText $c="#ff3232" x={4} y={1505}>2018年</ChartText>
    {MAJOR.map(([x, t]) => <ChartText key={x} $c="#ff3232" x={x + 4} y={1505}>{t}</ChartText>)}
    <ChartText $c="#d0d0d0" x={1630} y={1505}>2018/09/28/五</ChartText>
  </SubChart>
);

const ChevronGlyph = () => (
  <svg width={14} height={10} viewBox="0 0 14 10">
    <path d="M2 1 L7 8 L12 1" fill="none" stroke="#303030" strokeWidth={2.4} />
  </svg>
);

const LOGO_TEXT = 'www.9m8.cn';
const LogoMark = () => (
  <Logo width={80} height={80} viewBox="0 0 80 80">
    <defs><path id="logoArc" d="M8 46 A33 33 0 0 0 38 74" /></defs>
    <path d="M6.5 38 A33.5 33.5 0 0 1 73.5 38" fill="none" stroke="#d9604a" strokeWidth={13} />
    <path d="M73.5 44 A33.5 33.5 0 0 1 40 73" fill="none" stroke="#e8c040" strokeWidth={13} />
    <path d="M29 18 H50 V30 H56 V40 H50 V80 H36 L34 60 H27 V40 H22 V30 H29 Z" fill="#e8c040" />
    <rect x={36} y={2} width={8} height={16} fill="#e8c040" />
    <circle cx={40} cy={10} r={3} fill="#7ca8d8" />
    <path d="M30 40 H50 M30 50 H50 M33 30 H48" stroke="#8a90b8" strokeWidth={2} />
    <text fontFamily='"Liberation Sans", sans-serif' fontSize={7} fill="#5a6a98">
      <textPath href="#logoArc">{LOGO_TEXT}</textPath>
    </text>
  </Logo>
);

const LEFT_TABS: [string, boolean?][] = [['分时'],['1分钟'],['5分钟'],['15分钟'],['30分钟'],['60分钟'],['日线',true],['周线'],['月线'],['多周期'],['更多〉']];
const RIGHT_TOOLS = ['复权','叠加','历史','统计','画线','F10','标记'];
const BLOCKS: [string, string?, number?][] = [
  ['#40c040'],['#40c040'],['#ffcc00'],['#ffcc00'],['#ffcc00'],['#600000','9'],['#600000'],['#600000'],['#600000',undefined,28],
  ['#00ff00'],['#00ff00'],['#00ff00'],['#ffff00'],['#ffff00'],['#808080','7'],['#808080'],['#808080'],['#808080'],
];

const FW_COLON = '\uFF1A';

export default function App() {
  return (
    <Root>
      <GlobalStyle />
      <Toolbar>
        <LeftTools>
          <MenuBox><PanelIcon /></MenuBox>
          <Tabs>
            {LEFT_TABS.map(([t, a]) => <Tab key={t} $active={a}>{t}</Tab>)}
          </Tabs>
        </LeftTools>
        <RightTools>
          {RIGHT_TOOLS.map(t => <ToolButton key={t}>{t}</ToolButton>)}
          <ClippedButton>-自选</ClippedButton>
        </RightTools>
      </Toolbar>

      <MainPane>
        <MainChart />
        <TitleRow>
          300750 宁德时代(日线,前复权)
          <TitleChevron><ChevronGlyph /></TitleChevron>
          <StudyName>庄影追踪</StudyName>
          <DimLabel>买卖盘比</DimLabel>
          <GreyBox />
          <RatioA>:1.28</RatioA>
          <RatioB>:1.28</RatioB>
        </TitleRow>
        <BlockStrip>
          {BLOCKS.map(([c, t, after], i) => <Block key={i} $c={c} $after={after}>{t}</Block>)}
        </BlockStrip>
        <Attributes>
          <AttrLabel $c="#ff0000">所属风格{FW_COLON}</AttrLabel>
          <AttrValue $c="#ff0000" $gap={-0.4}>融资融券 大盘股 绩优股 两年新股 股权激励 深港通SZ MSCI成份 罗素大盘 百元股 昨日涨停 昨日首板 近期新高 近期强势</AttrValue>
          <AttrLabel $c="#ff00ff">所属概念{FW_COLON}</AttrLabel>
          <AttrValue $c="#ff00ff">泛珠三角 锂电池 新能源车</AttrValue>
          <AttrLabel $c="#ffff00">所属板块{FW_COLON}</AttrLabel>
          <AttrValue $c="#ffff00" $gap={34}>福建板块 电气设备</AttrValue>
        </Attributes>
        <Stats>
          <StatCell><span>营收同比{FW_COLON}</span><span>71.70%</span></StatCell>
          <StatCell><span>利润同比{FW_COLON}</span><span>45.65%</span></StatCell>
          <StatNote>综合评估基本面{FW_COLON}优秀!</StatNote>
          <StatNote>是否具备高送转潜力{FW_COLON}是!</StatNote>
        </Stats>
        <RightIcons>
          <svg width={24} height={22} viewBox="0 0 24 22">
            <path d="M12 1 L22 11 L12 21 L2 11 Z" fill="none" stroke="#707070" strokeWidth={1.5} />
          </svg>
          <PanelIcon />
        </RightIcons>
        <PriceTag>9</PriceTag>
      </MainPane>

      <SubHeader>
        <Chevron><ChevronGlyph /></Chevron>
        <span>筹码结构</span>
      </SubHeader>
      <ChipChart />
      <TimeAxis />

      <Watermark>
        <WatermarkTitle>公式指标网</WatermarkTitle>
        <LogoMark />
        <WatermarkUrl>www.9m8.cn</WatermarkUrl>
      </Watermark>
    </Root>
  );
}
